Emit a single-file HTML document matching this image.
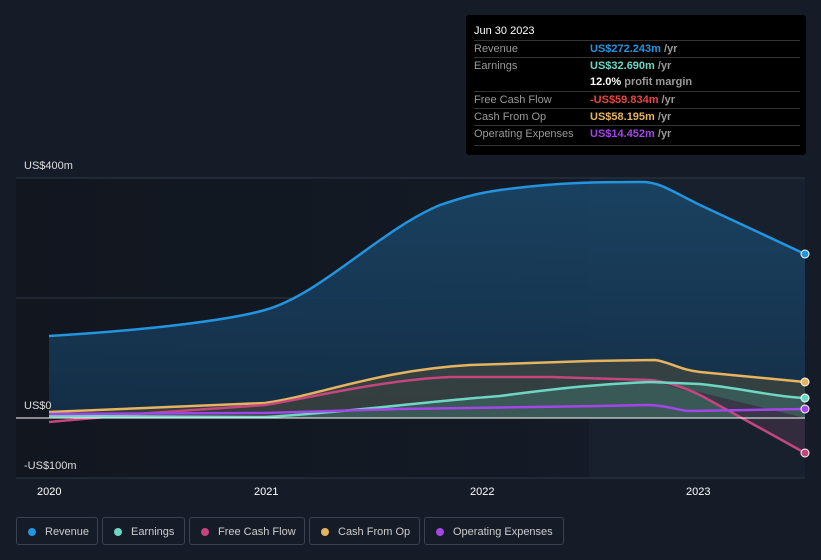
<!DOCTYPE html>
<html><head><style>
body{margin:0;background:#161c27;width:821px;height:560px;overflow:hidden;font-family:"Liberation Sans",sans-serif;position:relative}
.tip{position:absolute;left:466px;top:15px;width:340px;height:140px;background:#000;border-radius:3px;color:#fff;font-size:11px}
.tip .h{position:absolute;left:8px;top:10px;font-size:11px}
.row{position:absolute;left:8px;width:326px;border-top:1px solid #333;height:17px;line-height:17px}
.row .l{position:absolute;left:0;color:#999}
.row .v{position:absolute;left:116px;color:#999;font-weight:bold}
.leg{position:absolute;top:517px;height:28px;border:1px solid #3a4150;border-radius:3px;color:#ccc;font-size:11px;line-height:28px;box-sizing:border-box;padding-left:28px}
.leg:before{content:"";position:absolute;left:11px;top:10px;width:8px;height:8px;border-radius:50%;background:var(--c)}
.ax{position:absolute;color:#fff;font-size:11px}
</style></head><body>
<svg width="821" height="560" style="position:absolute;left:0;top:0">
<defs>
<linearGradient id="g" x1="0" y1="0" x2="0" y2="1"><stop offset="0" stop-color="#1a4566"/><stop offset="1" stop-color="#14304a"/></linearGradient>
<linearGradient id="bg" x1="0" y1="0" x2="1" y2="0"><stop offset="0" stop-color="#11161f"/><stop offset="1" stop-color="#141b26"/></linearGradient>
</defs>
<rect x="16" y="178" width="573" height="300" fill="url(#bg)"/>
<rect x="589" y="178" width="216" height="300" fill="#17202c"/>
<line x1="16" y1="178" x2="805" y2="178" stroke="#2e3846"/>
<line x1="16" y1="298" x2="805" y2="298" stroke="#2e3846"/>
<line x1="16" y1="478" x2="805" y2="478" stroke="#2e3846"/>
<path d="M49,336 C150,330 230,320 265,310 C320,295 380,230 440,205 C470,195 480,193 500,190 C560,182 600,182 645,182 C660,183 670,190 700,205 L805,254 L805,418 L49,418Z" fill="url(#g)" opacity="0.9"/>
<path d="M49,412 L265,403 C320,395 380,370 470,365 L590,361 L655,360 C670,362 680,370 700,372 L805,382 L805,418 L49,418Z" fill="#4a4a3a" opacity="0.6"/>
<path d="M49,416 L265,417 C350,412 420,402 500,396 C560,388 600,384 650,382 L700,384 C740,388 770,396 805,398 L805,418 L49,418Z" fill="#3d6a66" opacity="0.6"/>
<path d="M650,380 L700,395 L760,428 L805,453 L805,418 Z" fill="#3a2f44" opacity="0.8"/>
<path d="M49,336 C150,330 230,320 265,310 C320,295 380,230 440,205 C470,195 480,193 500,190 C560,182 600,182 645,182 C660,183 670,190 700,205 L805,254" fill="none" stroke="#2394df" stroke-width="2.5"/>
<path d="M49,412 L265,403 C320,395 380,370 470,365 L590,361 L655,360 C670,362 680,370 700,372 L805,382" fill="none" stroke="#e6b35f" stroke-width="2.5"/>
<path d="M49,422 L150,413 L265,405 C300,400 380,380 450,377 L550,377 L650,380 C670,382 690,390 700,395 L760,428 L805,453" fill="none" stroke="#c4467f" stroke-width="2.5"/>
<path d="M49,416 L265,417 C350,412 420,402 500,396 C560,388 600,384 650,382 L700,384 C740,388 770,396 805,398" fill="none" stroke="#6fd6c4" stroke-width="2.5"/>
<path d="M49,414 L265,413 L400,409 L600,406 L650,405 C670,406 680,411 690,411 L805,409" fill="none" stroke="#a346e8" stroke-width="2.5"/>
<line x1="16" y1="418" x2="805" y2="418" stroke="#fff" stroke-width="1"/>
<circle cx="805" cy="254" r="4" fill="#2394df" stroke="#fff"/>
<circle cx="805" cy="382" r="4" fill="#e6b35f" stroke="#fff"/>
<circle cx="805" cy="398" r="4" fill="#6fd6c4" stroke="#fff"/>
<circle cx="805" cy="409" r="4" fill="#a346e8" stroke="#fff"/>
<circle cx="805" cy="453" r="4" fill="#c4467f" stroke="#fff"/>
</svg>
<div class="ax" style="left:24px;top:160px;color:#ddd">US$400m</div>
<div class="ax" style="left:24px;top:400px;color:#ddd">US$0</div>
<div class="ax" style="left:24px;top:460px;color:#ddd">-US$100m</div>
<div class="ax" style="left:37px;top:486px">2020</div>
<div class="ax" style="left:254px;top:486px">2021</div>
<div class="ax" style="left:470px;top:486px">2022</div>
<div class="ax" style="left:686px;top:486px">2023</div>
<div class="tip">
<div class="h">Jun 30 2023</div>
<div class="row" style="top:25px"><span class="l">Revenue</span><span class="v"><span style="color:#2394df">US$272.243m</span> /yr</span></div>
<div class="row" style="top:42px"><span class="l">Earnings</span><span class="v"><span style="color:#6fd6c4">US$32.690m</span> /yr</span></div>
<div class="row" style="top:59px;border-top:none"><span class="v"><span style="color:#fff">12.0%</span> profit margin</span></div>
<div class="row" style="top:76px"><span class="l">Free Cash Flow</span><span class="v"><span style="color:#e84545">-US$59.834m</span> /yr</span></div>
<div class="row" style="top:93px"><span class="l">Cash From Op</span><span class="v"><span style="color:#e6b35f">US$58.195m</span> /yr</span></div>
<div class="row" style="top:110px"><span class="l">Operating Expenses</span><span class="v"><span style="color:#a346e8">US$14.452m</span> /yr</span></div>
<div class="row" style="top:130px;height:0"></div>
</div>
<div class="leg" style="left:16px;width:82px;--c:#2394df">Revenue</div>
<div class="leg" style="left:102px;width:83px;--c:#6fd6c4">Earnings</div>
<div class="leg" style="left:189px;width:116px;--c:#c4467f">Free Cash Flow</div>
<div class="leg" style="left:309px;width:111px;--c:#e6b35f">Cash From Op</div>
<div class="leg" style="left:424px;width:140px;--c:#a346e8">Operating Expenses</div>
</body></html>
